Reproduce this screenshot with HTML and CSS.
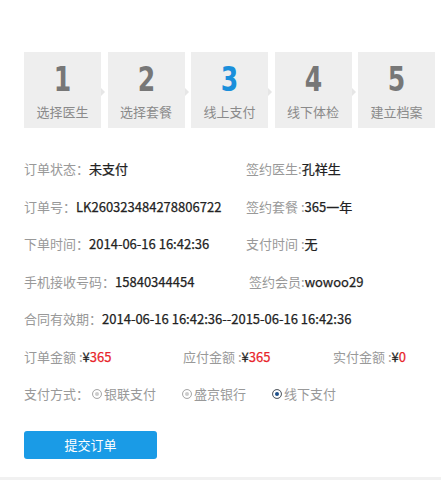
FILE: index.html
```html
<!DOCTYPE html>
<html lang="zh-CN">
<head>
  <meta charset="UTF-8">
  <meta name="viewport" content="width=device-width, initial-scale=1.0">
  <link rel="stylesheet" href="styles.css">
</head>
<body>
<div class="page">
  <div class="steps">
    <div class="step"><div class="step-num">1</div><div class="step-name">选择医生</div></div>
    <div class="step"><div class="step-num">2</div><div class="step-name">选择套餐</div></div>
    <div class="step active"><div class="step-num">3</div><div class="step-name">线上支付</div></div>
    <div class="step"><div class="step-num">4</div><div class="step-name">线下体检</div></div>
    <div class="step"><div class="step-num">5</div><div class="step-name">建立档案</div></div>
  </div>

  <div class="info">
    <div class="row">
      <div class="cell"><span class="label">订单状态：</span><span class="value">未支付</span></div>
      <div class="cell"><span class="label">签约医生:</span><span class="value">孔祥生</span></div>
    </div>
    <div class="row">
      <div class="cell"><span class="label">订单号：</span><span class="value">LK260323484278806722</span></div>
      <div class="cell"><span class="label">签约套餐 :</span><span class="value">365一年</span></div>
    </div>
    <div class="row">
      <div class="cell"><span class="label">下单时间：</span><span class="value">2014-06-16 16:42:36</span></div>
      <div class="cell"><span class="label">支付时间 :</span><span class="value">无</span></div>
    </div>
    <div class="row">
      <div class="cell"><span class="label">手机接收号码：</span><span class="value">15840344454</span></div>
      <div class="cell shift"><span class="label">签约会员:</span><span class="value">wowoo29</span></div>
    </div>
    <div class="row">
      <div class="cell"><span class="label">合同有效期：</span><span class="value">2014-06-16 16:42:36--2015-06-16 16:42:36</span></div>
    </div>
    <div class="row three">
      <div class="cell"><span class="label">订单金额 :</span><span class="value">¥</span><span class="money">365</span></div>
      <div class="cell"><span class="label">应付金额 :</span><span class="value">¥</span><span class="money">365</span></div>
      <div class="cell"><span class="label">实付金额 :</span><span class="value">¥</span><span class="money">0</span></div>
    </div>
    <div class="row pay">
      <span class="label">支付方式：</span>
      <label class="radio"><span class="dot"></span>银联支付</label>
      <label class="radio"><span class="dot"></span>盛京银行</label>
      <label class="radio checked"><span class="dot"></span>线下支付</label>
    </div>
  </div>

  <button class="submit">提交订单</button>
</div>
</body>
</html>
```

FILE: styles.css
```css
body {
  margin: 0;
  background: #fff;
  font-family: "Noto Sans CJK SC", "Noto Sans", sans-serif;
  font-size: 13px;
  color: #333;
}

.page {
  padding: 52px 0 0 24px;
  height: 425px;
  border-bottom: 3px solid #f1f1f1;
}

.steps {
  display: flex;
  gap: 6.5px;
}

.step {
  position: relative;
  width: 77px;
  height: 76px;
  background-color: #eeeeee;
  text-align: center;
}

.step:not(:last-child)::after {
  content: "";
  position: absolute;
  right: -4px;
  top: 36px;
  border-top: 4px solid transparent;
  border-bottom: 4px solid transparent;
  border-left: 4px solid #e6e6e6;
}

.step-num {
  padding-top: 11px;
  height: 32px;
  line-height: 32px;
  font-family: "DejaVu Sans", sans-serif;
  font-stretch: condensed;
  font-weight: bold;
  font-size: 34px;
  color: #777;
  transform: scaleX(0.82);
}

.active .step-num {
  color: #1a8fdb;
}

.step-name {
  margin-top: 7px;
  font-size: 13px;
  color: #8a8a8a;
}

.info {
  margin-top: 22px;
}

.row {
  display: grid;
  grid-template-columns: 222px auto;
  height: 37.5px;
  line-height: 37.5px;
  white-space: nowrap;
}

.row.three {
  grid-template-columns: 159px 150px auto;
}

.cell.shift {
  padding-left: 3px;
}

.label {
  color: #999;
}

.value {
  color: #222;
  -webkit-text-stroke: 0.25px #222;
}

.money {
  color: #e8252b;
  -webkit-text-stroke: 0.25px #e8252b;
}

.row.pay {
  display: flex;
  align-items: center;
}

.radio {
  display: inline-flex;
  align-items: center;
  color: #999;
  margin-right: 26px;
}

.radio:first-of-type {
  margin-left: 3px;
}

.dot {
  width: 8px;
  height: 8px;
  border: 1px solid #aaa;
  border-radius: 50%;
  margin-right: 2px;
  box-shadow: inset 0 0 0 2px #fff;
  background: #ccc;
}

.checked .dot {
  background: #1d4f8a;
  border-color: #666;
}

.submit {
  display: block;
  margin-top: 18px;
  width: 133px;
  height: 28px;
  border: none;
  border-radius: 3px;
  background-color: #1a9be6;
  color: #fff;
  font-family: "Noto Sans CJK SC", sans-serif;
  font-size: 13px;
  cursor: pointer;
}
```
